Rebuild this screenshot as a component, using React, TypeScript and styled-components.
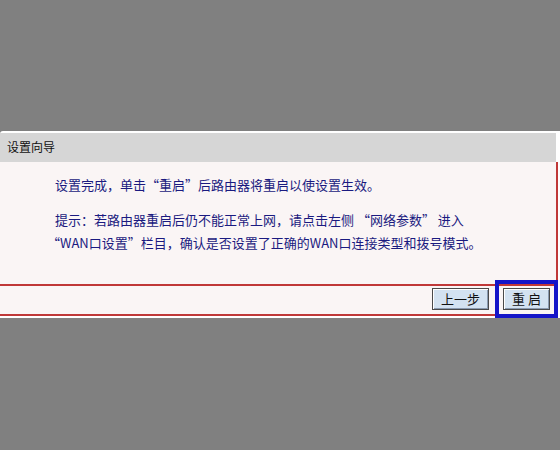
import styled, { createGlobalStyle } from "styled-components";

const GlobalStyle = createGlobalStyle`
    html, body {
        margin: 0;
        padding: 0;
        background: #808080;
    }
    body {
        font-family: "Noto Sans CJK SC", "Liberation Sans", sans-serif;
    }
`

export default function App() {
    return (
        <Page>
            <GlobalStyle />
            <Panel>
                <Header>设置向导</Header>
                <Body>
                    <Line $top={11}>设置完成，单击“重启”后路由器将重启以使设置生效。</Line>
                    <Line $top={12}>提示：若路由器重启后仍不能正常上网，请点击左侧 “网络参数” 进入</Line>
                    <Line $indent={-8}>“WAN口设置”栏目，确认是否设置了正确的WAN口连接类型和拨号模式。</Line>
                </Body>
                <Footer>
                    <Button>上一步</Button>
                    <Button $focused>重 启</Button>
                </Footer>
            </Panel>
        </Page>
    );
}

const Page = styled.div`
    width: 560px;
    height: 450px;
    padding-top: 131px;
    box-sizing: border-box;
    background: #808080;
    overflow: hidden;
`

const Panel = styled.div`
    width: 560px;
    padding: 2px 0 2px 0;
    background: #ffffff;
    border-top-left-radius: 3px;
`

const Header = styled.div`
    height: 29px;
    margin-right: 4px;
    padding-left: 7px;
    line-height: 28px;
    font-size: 12px;
    color: #111111;
    background: #d6d6d6;
`

const Body = styled.div`
    height: 124px;
    margin-right: 2px;
    padding-left: 55px;
    box-sizing: border-box;
    display: flex;
    flex-direction: column;
    background: #faf5f5;
    border-right: 2px solid #c03838;
    border-bottom: 2px solid #c03838;
`

const Line = styled.div<{ $top?: number; $indent?: number }>`
    margin-top: ${(p) => p.$top ?? 0}px;
    margin-left: ${(p) => p.$indent ?? 0}px;
    height: 23px;
    line-height: 23px;
    font-size: 13px;
    color: #1a1a80;
    white-space: nowrap;
`

const Footer = styled.div`
    height: 28px;
    margin-right: 2px;
    padding-right: 8px;
    display: flex;
    align-items: center;
    justify-content: flex-end;
    gap: 14px;
    background: #faf5f5;
    border-bottom: 2px solid #c03838;
`

const Button = styled.button<{ $focused?: boolean }>`
    height: 22px;
    padding: 0 8px;
    margin-top: -2px;
    font-family: "Noto Sans CJK SC", sans-serif;
    font-size: 13px;
    line-height: 18px;
    color: #111111;
    background: #d3e2f1;
    border: 1px solid #4a4a4a;
    box-shadow: inset 1px 1px 0 #ffffff, inset -1px -1px 0 #8a9ab0;
    border-radius: 0;
    outline: ${(p) => (p.$focused ? "4px solid #1414c8" : "none")};
    outline-offset: 4px;
`
